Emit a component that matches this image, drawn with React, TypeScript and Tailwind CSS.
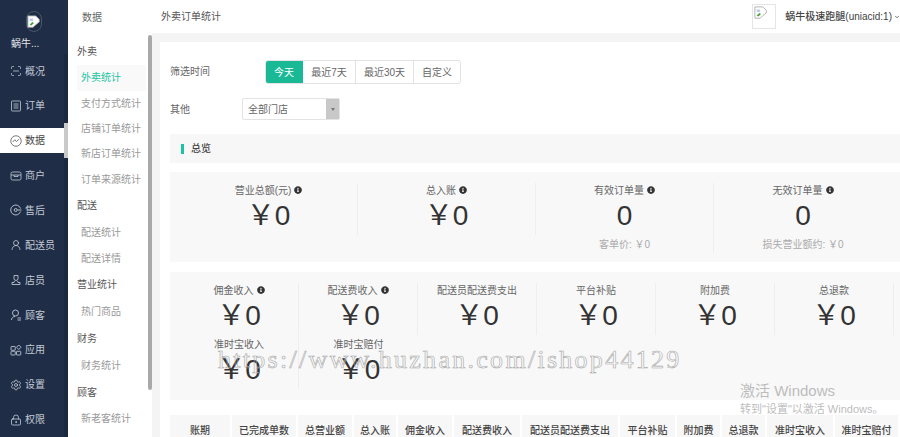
import { ScanLine, UserRound, Settings, LockKeyhole, ChevronDown } from "lucide-react";
import type { ComponentType } from "react";
import { FaInfoCircle } from "react-icons/fa";

const FONT = "font-['Liberation_Sans','Noto_Sans_CJK_SC',sans-serif]";

type IconProps = { className?: string; strokeWidth?: number };

function TrendIcon({ className }: IconProps) {
  return (
    <svg viewBox="0 0 24 24" fill="none" stroke="currentColor" strokeWidth="1.4" className={className}>
      <circle cx="12" cy="12" r="10.5" />
      <path d="M5.5 14l4-4.5 3.5 3.5 5.5-5" />
    </svg>
  );
}

function OrderIcon({ className }: IconProps) {
  return (
    <svg viewBox="0 0 24 24" fill="none" stroke="currentColor" strokeWidth="1.6" className={className}>
      <rect x="3" y="2" width="18" height="20" rx="1.5" />
      <path d="M7 8h10M7 12h10M7 16h10" />
    </svg>
  );
}

function StoreIcon({ className }: IconProps) {
  return (
    <svg viewBox="0 0 24 24" fill="none" stroke="currentColor" strokeWidth="1.6" className={className}>
      <rect x="2" y="4" width="20" height="16" rx="3" />
      <path d="M2 10h20M8 10v3h8v-3" />
    </svg>
  );
}

function AfterSaleIcon({ className }: IconProps) {
  return (
    <svg viewBox="0 0 24 24" fill="none" stroke="currentColor" strokeWidth="1.8" className={className}>
      <path d="M21 15a10 10 0 1 1 0-6" />
      <circle cx="11.5" cy="12" r="3" />
      <path d="M15 12h8" />
    </svg>
  );
}

function ClerkIcon({ className }: IconProps) {
  return (
    <svg viewBox="0 0 24 24" fill="none" stroke="currentColor" strokeWidth="1.7" className={className}>
      <path d="M8 3h8v6a4 4 0 0 1-8 0z" />
      <path d="M9 14l-1 3H4v4h16v-4h-4l-1-3" />
    </svg>
  );
}

function CustomerIcon({ className }: IconProps) {
  return (
    <svg viewBox="0 0 24 24" fill="none" stroke="currentColor" strokeWidth="1.8" className={className}>
      <circle cx="11" cy="8" r="6" />
      <path d="M3 22c0-4 3-7 7-7M15 18h7M15 22h7" />
    </svg>
  );
}

function AppsIcon({ className }: IconProps) {
  return (
    <svg viewBox="0 0 24 24" fill="none" stroke="currentColor" strokeWidth="1.7" className={className}>
      <rect x="2" y="5" width="8.5" height="7.5" rx="1" />
      <rect x="2" y="14.5" width="8.5" height="7.5" rx="1" />
      <rect x="13" y="14.5" width="8.5" height="7.5" rx="1" />
      <path d="M17.5 2l4.5 4.5-4.5 4.5-4.5-4.5z" />
    </svg>
  );
}

const navItems: { label: string; icon: ComponentType<IconProps>; active?: boolean }[] = [
  { label: "概况", icon: ScanLine },
  { label: "订单", icon: OrderIcon },
  { label: "数据", icon: TrendIcon, active: true },
  { label: "商户", icon: StoreIcon },
  { label: "售后", icon: AfterSaleIcon },
  { label: "配送员", icon: UserRound },
  { label: "店员", icon: ClerkIcon },
  { label: "顾客", icon: CustomerIcon },
  { label: "应用", icon: AppsIcon },
  { label: "设置", icon: Settings },
  { label: "权限", icon: LockKeyhole },
];

function BrokenImage() {
  return (
    <svg viewBox="0 0 16 16" className="h-[14px] w-[14px]">
      <path d="M1 1h9l4 4v3l-4 3-3 3H1z" fill="#fff" stroke="#a9a9a9" />
      <path d="M3 11l3-3 2 1-3 3z" fill="#4aa03f" />
      <path d="M3 4h4v3H3z" fill="#b9cfe8" />
    </svg>
  );
}

const subMenu: { title: string; items: string[] }[] = [
  { title: "外卖", items: ["外卖统计", "支付方式统计", "店铺订单统计", "新店订单统计", "订单来源统计"] },
  { title: "配送", items: ["配送统计", "配送详情"] },
  { title: "营业统计", items: ["热门商品"] },
  { title: "财务", items: ["财务统计"] },
  { title: "顾客", items: ["新老客统计"] },
];

const overview = [
  { label: "营业总额(元)", value: "￥0", info: true },
  { label: "总入账", value: "￥0", info: true },
  { label: "有效订单量", value: "0", info: true, sub: "客单价: ￥0" },
  { label: "无效订单量", value: "0", info: true, sub: "损失营业额约: ￥0" },
];

const income = [
  { label: "佣金收入", info: true },
  { label: "配送费收入", info: true },
  { label: "配送员配送费支出" },
  { label: "平台补贴" },
  { label: "附加费" },
  { label: "总退款" },
  { label: "准时宝收入" },
  { label: "准时宝赔付" },
];

const columns = ["账期", "已完成单数", "总营业额", "总入账", "佣金收入", "配送费收入", "配送员配送费支出", "平台补贴", "附加费", "总退款", "准时宝收入", "准时宝赔付"];

function Stat({ label, value, info, sub, last }: { label: string; value: string; info?: boolean; sub?: string; last?: boolean }) {
  return (
    <div className={`flex flex-col items-center self-start ${last ? "" : "border-r border-[#eeeeee]"}`}>
      <div className="flex h-[14px] items-center gap-[3px] text-[10px] text-[#666]">
        {label}
        {info && <FaInfoCircle className="h-[8px] w-[8px] text-[#333]" />}
      </div>
      <div className="flex h-[38px] items-center text-[28px] leading-none text-[#333]">{value}</div>
      {sub && <div className="flex h-[18px] items-center text-[10px] text-[#aaa]">{sub}</div>}
    </div>
  );
}

export default function App() {
  return (
    <div className={`relative flex h-[437px] w-[900px] overflow-hidden bg-white ${FONT}`}>
      <aside className="flex w-[68px] shrink-0 flex-col bg-[#1f2d46]">
        <div className="flex h-[54px] flex-col items-center pt-[11px]">
          <div className="flex h-[21px] w-[16px] items-center justify-center rounded-full border border-[#4a566b]">
            <BrokenImage />
          </div>
          <div className="mt-[5px] w-full pl-[11px] text-[10px] leading-[14px] text-[#e4e7ec]">蜗牛...</div>
        </div>
        {navItems.map((item) => {
          const Icon = item.icon;
          return (
            <div key={item.label} className="flex h-[35.2px] items-center">
              <div
                className={`flex h-[25px] w-[64px] items-center gap-[3px] pl-[10px] text-[10px] ${
                  item.active ? "bg-white text-[#444]" : "text-[#c3cad6]"
                }`}
              >
                <Icon className="h-[12px] w-[12px] shrink-0" strokeWidth={1.6} />
                <span className="whitespace-nowrap">{item.label}</span>
              </div>
              <div className={`h-full w-[4px] ${item.active ? "bg-[#c9c9c9]" : "bg-[#1a2840]"}`} />
            </div>
          );
        })}
      </aside>

      <div className="flex w-[84px] shrink-0 flex-col">
        <div className="flex h-[35px] shrink-0 items-center pl-[14px] text-[10px] text-[#666]">数据</div>
        <div className="flex min-h-0 flex-1">
          <div className="w-[80px] pl-[9px] pt-[2px]">
            {subMenu.map((group) => (
              <div key={group.title}>
                <div className="flex h-[28.3px] items-center text-[10px] text-[#555]">{group.title}</div>
                {group.items.map((name) => (
                  <div
                    key={name}
                    className={`flex h-[25.3px] w-[69px] items-center whitespace-nowrap pl-[4px] text-[10px] ${
                      name === "外卖统计" ? "bg-[#f9f9f9] text-[#1cc3a3]" : "text-[#999]"
                    }`}
                  >
                    {name}
                  </div>
                ))}
              </div>
            ))}
          </div>
          <div className="h-[355px] w-[4px] rounded-sm bg-[#a9a9a9]" />
        </div>
      </div>

      <main className="flex min-w-0 flex-1 flex-col">
        <header className="flex h-[33px] shrink-0 items-center justify-between pl-[9px]">
          <span className="text-[10px] text-[#555]">外卖订单统计</span>
          <div className="flex items-center">
            <div className="flex h-[25px] w-[24px] items-start justify-start border border-[#e5e5e5] p-[1px]">
              <BrokenImage />
            </div>
            <span className="ml-[9px] whitespace-nowrap text-[10px] font-medium text-[#444]">蜗牛极速跑腿(uniacid:1)</span>
            <ChevronDown className="ml-[2px] h-[6px] w-[6px] text-[#444]" strokeWidth={3} />
          </div>
        </header>
        <div className="h-[9px] shrink-0 bg-[#f4f4f4]" />

        <div className="min-h-0 flex-1 border-l-[8px] border-[#f4f4f4] pl-[10px] pt-[18px]">
          <div className="flex h-[24px] items-center">
            <span className="w-[95px] -translate-y-px text-[10px] text-[#666]">筛选时间</span>
            <div className="flex h-full overflow-hidden rounded-[3px] border border-[#e3e3e3] text-[10px] text-[#666]">
              <div className="-ml-px flex w-[38px] items-center justify-center bg-[#19b996] text-white">今天</div>
              <div className="flex w-[53px] items-center justify-center border-r border-[#e3e3e3]">最近7天</div>
              <div className="flex w-[58px] items-center justify-center border-r border-[#e3e3e3]">最近30天</div>
              <div className="flex w-[46px] items-center justify-center">自定义</div>
            </div>
          </div>

          <div className="mt-[14px] flex h-[22px] items-center">
            <span className="w-[72px] text-[10px] text-[#666]">其他</span>
            <div className="flex h-full w-[98px] items-center justify-between rounded-[2px] border border-[#e3e3e3] pl-[5px] text-[10px] text-[#666]">
              全部门店
              <div className="flex h-full w-[13px] items-center justify-center bg-[#c8c8c8]">
                <div className="h-0 w-0 border-x-[2px] border-t-[3px] border-x-transparent border-t-[#777]" />
              </div>
            </div>
          </div>

          <div className="mt-[14px] flex h-[29px] items-center gap-[7px] bg-[#f7f7f7] pl-[11px] text-[10px] font-medium text-[#444]">
            <div className="h-[10px] w-[3px] bg-[#19c3a3]" />
            总览
          </div>

          <div className="mt-[9px] h-[90px] bg-[#f8f8f8] pl-[10px] pt-[11px]">
            <div className="grid grid-cols-[repeat(4,178px)]">
              {overview.map((s, i) => (
                <Stat key={s.label} {...s} last={i === overview.length - 1} />
              ))}
            </div>
          </div>

          <div className="mt-[10px] h-[128px] bg-[#f8f8f8] pl-[10px] pt-[11px]">
            <div className="grid grid-cols-[repeat(6,119px)] gap-y-[2px]">
              {income.map((s, i) => (
                <Stat key={s.label} label={s.label} value="￥0" info={s.info} last={i === income.length - 1} />
              ))}
            </div>
          </div>

          <div className="mt-[15px] grid h-[30px] grid-cols-[62px_66px_56px_44px_56px_68px_98px_57px_45px_45px_68px_65px]">
            {columns.map((c) => (
              <div key={c} className="flex items-center justify-center whitespace-nowrap border-r-2 border-white bg-[#f7f7f7] text-[10px] font-medium text-[#444]">
                {c}
              </div>
            ))}
          </div>
        </div>
      </main>

      <div className="pointer-events-none absolute left-[218px] top-[344px] whitespace-nowrap font-['Liberation_Serif',serif] text-[26px] leading-[32px] tracking-[2.28px] text-transparent [-webkit-text-stroke:0.6px_#a8a8a8]">
        https://www.huzhan.com/ishop44129
      </div>
      <div className="pointer-events-none absolute left-[740px] top-[381px] whitespace-nowrap text-[#bdbdbd]">
        <div className="text-[15px] leading-[20px]">激活 Windows</div>
        <div className="text-[11px] leading-[16px]">转到"设置"以激活 Windows。</div>
      </div>
    </div>
  );
}
